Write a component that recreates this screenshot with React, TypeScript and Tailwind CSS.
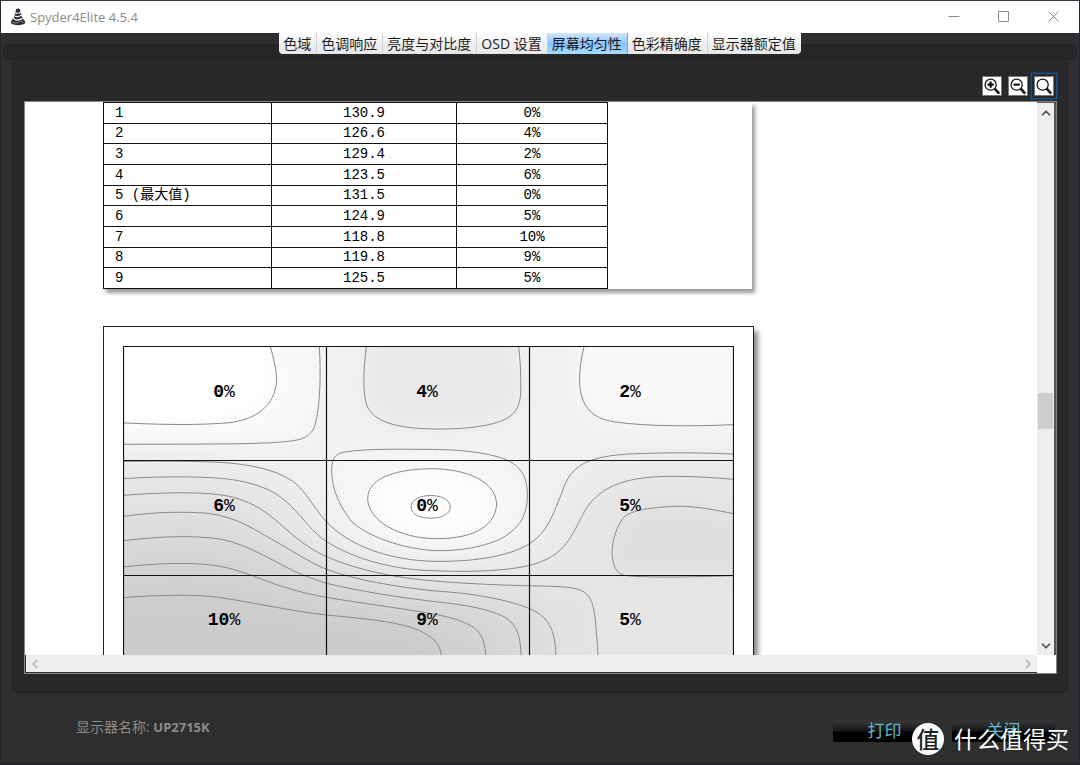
import { ChevronDown, ChevronLeft, ChevronRight, ChevronUp } from 'lucide-react';

const tabs = ['色域', '色调响应', '亮度与对比度', 'OSD 设置', '屏幕均匀性', '色彩精确度', '显示器额定值'];

const rows = [
    { zone: '1', luminance: '130.9', diff: '0%' },
    { zone: '2', luminance: '126.6', diff: '4%' },
    { zone: '3', luminance: '129.4', diff: '2%' },
    { zone: '4', luminance: '123.5', diff: '6%' },
    { zone: '5 (最大值)', luminance: '131.5', diff: '0%' },
    { zone: '6', luminance: '124.9', diff: '5%' },
    { zone: '7', luminance: '118.8', diff: '10%' },
    { zone: '8', luminance: '119.8', diff: '9%' },
    { zone: '9', luminance: '125.5', diff: '5%' },
];

// contour lines, drawn at three units per pixel
const closedRegions = [
    { fill: '#f8f8f8', line: 'M613 80 C618 160 616 260 600 315 C590 350 560 360 520 364 C440 373 300 372 25 373', close: 'H-60 V0 H613 Z' },
    { fill: '#ffffff', line: 'M466 80 C476 115 485 150 485 185 C480 250 430 305 320 310 C200 317 120 312 25 309', close: 'H-60 V0 H466 Z' },
    { fill: '#e9e9e9', line: 'M754 80 C745 150 743 220 755 255 C775 305 840 325 960 327 C1050 328 1130 318 1170 298 C1225 270 1217 220 1217 170 C1217 140 1214 110 1211 80', close: 'V0 H754 Z' },
    { fill: '#f9f9f9', line: 'M1407 80 C1397 120 1393 150 1394 190 C1398 260 1430 295 1500 306 C1600 320 1740 319 1855 314', close: 'H1940 V0 H1407 Z' },
    { fill: '#ebebeb', line: 'M25 424 C120 424 220 422 330 428 C430 436 490 455 535 485 C575 515 600 570 635 606 C700 675 820 722 960 724 C1090 726 1190 705 1244 671 C1300 635 1315 580 1340 520 C1355 470 1380 440 1420 424 C1470 404 1540 401 1600 400 C1700 397 1780 399 1855 402', close: 'H1940 V1200 H-60 V424 Z' },
    { fill: '#e6e6e6', line: 'M25 476 C150 468 300 468 370 482 C450 498 490 520 530 560 C570 600 590 635 635 665 C720 720 850 752 960 752 C1080 758 1190 750 1244 736 C1330 715 1360 670 1390 610 C1420 550 1430 540 1470 510 C1530 475 1600 469 1680 469 C1740 469 1800 473 1855 478', close: 'H1940 V1200 H-60 V476 Z' },
    { fill: '#e2e2e2', line: 'M25 526 C150 516 260 516 320 525 C420 540 470 590 510 625 C560 670 600 695 635 710 C730 752 850 775 960 783 C1060 792 1200 797 1280 798 C1340 800 1370 800 1400 812 C1440 830 1440 890 1445 950 C1449 985 1449 1000 1449 1110', close: 'V1200 H-60 V526 Z' },
    { fill: '#dddddd', line: 'M25 589 C120 576 200 574 280 580 C370 592 420 630 500 675 C560 710 600 735 635 748 C720 780 840 800 960 813 C1080 820 1180 840 1244 866 C1300 890 1322 930 1322 1005 V1110', close: 'V1200 H-60 V589 Z' },
    { fill: '#d7d7d7', line: 'M25 662 C130 650 230 644 320 658 C400 675 470 720 540 755 C580 772 610 782 635 790 C740 815 840 830 960 845 C1060 855 1130 870 1170 892 C1210 915 1217 960 1218 1005 V1110', close: 'V1200 H-60 V662 Z' },
    { fill: '#d1d1d1', line: 'M25 741 C120 730 230 725 310 738 C390 752 440 782 520 805 C560 818 600 826 635 832 C740 850 840 862 930 878 C1010 890 1050 905 1080 925 C1105 945 1111 980 1112 1005 V1110', close: 'V1200 H-60 V741 Z' },
    { fill: '#cccccc', line: 'M25 833 C150 823 250 824 310 832 C420 848 520 872 635 885 C740 895 850 905 910 930 C950 948 975 970 979 1005 V1110', close: 'V1200 H-60 V833 Z' },
    { fill: '#f5f5f5', line: 'M650 450 C650 410 665 400 690 396 C760 385 860 388 930 388 C1050 388 1130 400 1180 422 C1225 445 1238 480 1237 530 C1236 590 1210 630 1150 660 C1080 690 1000 693 960 692 C860 686 760 650 710 605 C675 560 650 510 650 450', close: 'Z' },
    { fill: '#fdfdfd', line: 'M758 535 C760 470 850 446 960 446 C1070 450 1142 490 1145 552 C1142 610 1090 656 965 656 C850 656 758 600 758 535', close: 'Z' },
    { fill: '#ffffff', line: 'M888 561 C888 515 1006 515 1006 561 C1006 606 888 606 888 561', close: 'Z' },
    { fill: '#e0e0e0', line: 'M1855 581 C1800 570 1740 557 1680 559 C1600 563 1540 570 1520 600 C1495 640 1490 680 1492 710 C1497 750 1510 766 1540 768 C1640 774 1750 770 1855 767', close: 'H1940 V581 Z' },
];

const zoneLabels = [
    ['0', '4', '2'],
    ['6', '0', '5'],
    ['10', '9', '5'],
];

function AppIcon() {
    return (
        <svg className="w-4 h-[18px]" viewBox="0 0 16 18" fill="none">
            <path d="M6 1.2Q8 0 10 1.2L10.6 5L12.2 10L15 13.2Q16 15.5 12.5 16.6Q8 18 3.5 16.6Q0 15.5 1 13.2L3.8 10L5.4 5Z" fill="#2a2d31" />
            <path d="M5.4 4.6Q8.5 6.2 10.6 3.8M4.6 8.2Q8.8 9.4 11.4 6.8M3.6 10.4Q6 13.6 12.2 10.6" stroke="#f1f1f1" strokeWidth="1.2" />
            <path d="M2 14Q7 16 9 13.8M9 12.4L13.5 14.6" stroke="#8d9298" />
        </svg>
    );
}

function TitleBar() {
    return (
        <header className="h-[33px] shrink-0 bg-white border-t border-[#3a3a3a] flex items-center pl-[9px] text-[#8c8c8c]">
            <AppIcon />
            <h1 className="flex-1 ml-1 text-[13px] leading-5 font-['Open_Sans','Noto_Sans',sans-serif]">Spyder4Elite 4.5.4</h1>
            <button aria-label="Minimize" className="w-[50px] h-full flex items-center justify-center">
                <svg className="w-3 h-3" viewBox="0 0 12 12" stroke="currentColor"><path d="M0.5 5.5H11.5" /></svg>
            </button>
            <button aria-label="Maximize" className="w-[50px] h-full flex items-center justify-center">
                <svg className="w-3 h-3" viewBox="0 0 12 12" fill="none" stroke="currentColor"><path d="M0.5 0.5H10.5V10.5H0.5Z" /></svg>
            </button>
            <button aria-label="Close" className="w-[50px] h-full flex items-center justify-center">
                <svg className="w-3 h-3" viewBox="0 0 12 12" stroke="currentColor"><path d="M0.5 0.5L10.5 10.5M10.5 0.5L0.5 10.5" /></svg>
            </button>
        </header>
    );
}

function TabStrip() {
    return (
        <div className="relative h-[26px] shrink-0 flex justify-center">
            <div className="absolute inset-x-0.5 bottom-0 h-[15px] rounded bg-[#272727] border border-[#212121]"></div>
            <nav className="relative h-[21px] flex rounded-b overflow-hidden bg-linear-to-b from-white via-[#f0f0f0] to-[#e6e6e6]">
                {tabs.map((tab) => (
                    <button
                        key={tab}
                        className={
                            tab === '屏幕均匀性'
                                ? 'pl-1 pr-[5px] border-r border-[#6aaee6] bg-linear-to-b from-[#d3e8fd] via-[#8ac4fa] to-[#a5dcff] text-sm leading-5 text-[#101828] whitespace-nowrap'
                                : 'pl-1 pr-[5px] border-r border-[#d0d0d0] last:border-r-0 text-sm leading-5 text-[#1c1c1c] whitespace-nowrap'
                        }
                    >
                        {tab}
                    </button>
                ))}
            </nav>
        </div>
    );
}

function ZoomButton({ label, sign, focused }: { label: string; sign?: string; focused?: boolean }) {
    return (
        <button
            aria-label={label}
            className={focused ? 'p-0.5 border border-[#1c4f80] outline outline-[#173f66]' : 'p-[3px]'}
        >
            <svg className="w-5 h-5 bg-white border border-[#777]" viewBox="0 0 20 20" fill="none" stroke="#111">
                <circle cx="8.5" cy="8.5" r="6.2" strokeWidth="1.4" />
                <path d="M13 13L18 18.5" strokeWidth="2.8" />
                {sign && <path d={sign} strokeWidth="2.4" />}
            </svg>
        </button>
    );
}

function ResultTable() {
    return (
        <div className="w-[649px] bg-white shadow-[3px_4px_4px_#999]">
            <table className="w-[505px] h-[187px] table-fixed border-collapse font-['Liberation_Mono','Noto_Sans_CJK_SC',monospace] text-sm leading-4 text-black">
                <colgroup>
                    <col className="w-[168px]" />
                    <col className="w-[185px]" />
                    <col />
                </colgroup>
                <tbody>
                    {rows.map((row) => (
                        <tr key={row.zone}>
                            <td className="border border-[#111] p-0 pl-[11px]">{row.zone}</td>
                            <td className="border border-[#111] p-0 text-center">{row.luminance}</td>
                            <td className="border border-[#111] p-0 text-center">{row.diff}</td>
                        </tr>
                    ))}
                </tbody>
            </table>
        </div>
    );
}

function UniformityMap() {
    return (
        <div className="w-[651px] p-[19px] pb-10 bg-white border border-[#222] shadow-[4px_5px_5px_#888]">
            <svg className="block w-[611px] h-[344px]" viewBox="0 0 611 344">
                <defs>
                    <filter id="soften" x="-5%" y="-5%" width="110%" height="110%">
                        <feGaussianBlur stdDeviation="28" />
                    </filter>
                </defs>
                <rect width="611" height="344" fill="#f1f1f1" />
                <g transform="scale(0.33333) translate(-24 -78)" fill="none">
                    <g filter="url(#soften)">
                        <path d="M-60 0H1940V1200H-60Z" fill="#f1f1f1" />
                        {closedRegions.map((r) => <path key={r.line} d={`${r.line} ${r.close}`} fill={r.fill} />)}
                    </g>
                    <g stroke="#8a8a8a" strokeWidth="3">
                        {closedRegions.map((r) => <path key={r.line} d={r.line} />)}
                    </g>
                </g>
                <path d="M0.5 344V0.5H610.5V344M203.5 0V344M406.5 0V344M0 114.5H611M0 229.5H611" fill="none" stroke="#111" strokeWidth="1.2" />
                <g textAnchor="middle" className="font-['Liberation_Mono',monospace] font-bold text-[18px]" fill="#000">
                    {zoneLabels.map((line, y) =>
                        line.map((label, x) => (
                            <text key={`${x}-${y}`} x={101 + x * 203} y={51 + y * 114}>
                                {label}<tspan className="font-normal">%</tspan>
                            </text>
                        ))
                    )}
                </g>
            </svg>
        </div>
    );
}

function Viewer() {
    return (
        <div className="flex-1 min-h-0 bg-white border border-[#858585] flex flex-col">
            <div className="flex-1 min-h-0 flex">
                <div className="flex-1 min-w-0 overflow-hidden pl-[78px] flex flex-col gap-[37px]">
                    <ResultTable />
                    <UniformityMap />
                </div>
                <div className="w-[19px] shrink-0 bg-[#eeeeee] border-t border-r-2 border-[#555] flex flex-col items-center text-[#505050]">
                    <button aria-label="Scroll up" className="py-[3px]"><ChevronUp size={14} strokeWidth={3} /></button>
                    <div className="grow-[272]"></div>
                    <div className="w-[15px] h-9 bg-[#cdcdcd]"></div>
                    <div className="grow-[210]"></div>
                    <button aria-label="Scroll down" className="py-0.5"><ChevronDown size={14} strokeWidth={3} /></button>
                </div>
            </div>
            <div className="h-[18px] shrink-0 flex">
                <div className="flex-1 bg-[#eeeeee] border-l border-b border-[#333] flex items-center justify-between px-0.5 text-[#b5b5b5]">
                    <button aria-label="Scroll left"><ChevronLeft size={14} strokeWidth={3} /></button>
                    <button aria-label="Scroll right"><ChevronRight size={14} strokeWidth={3} /></button>
                </div>
                <div className="w-[19px] bg-white"></div>
            </div>
        </div>
    );
}

function Watermark() {
    return (
        <div className="absolute right-[10px] bottom-2 flex items-center gap-[10px] text-white">
            <span className="w-8 h-8 rounded-full bg-white text-[#222] text-[23px] leading-8 font-medium text-center">值</span>
            <span className="text-[23px] leading-8">什么值得买</span>
        </div>
    );
}

export default function App() {
    return (
        <div className="h-screen flex flex-col bg-[#2e2e2e] border-x border-[#24242a] font-['Open_Sans','Noto_Sans_CJK_SC',sans-serif]">
            <TitleBar />
            <TabStrip />
            <main className="flex-1 min-h-0 mx-[11px] pl-[11px] pr-[10px] pb-[18px] bg-[#282828] border border-t-0 border-[#222] rounded-b-lg flex flex-col">
                <div className="h-[42px] shrink-0 flex justify-end items-center pt-3">
                    <ZoomButton label="Zoom in" sign="M5 8.5H12M8.5 5V12" />
                    <ZoomButton label="Zoom out" sign="M5 8.5H12" />
                    <ZoomButton label="Actual size" focused />
                </div>
                <Viewer />
            </main>
            <footer className="relative h-[72px] shrink-0 flex items-center justify-between pl-[75px] pr-6 border-b-2 border-[#25232d]">
                <p className="pb-0.5 text-sm text-[#8b8b8b]">显示器名称: <b className="text-[13px]">UP2715K</b></p>
                <div className="flex gap-4 pt-1.5 text-[17px] leading-5 text-[#5fb9d0]">
                    <button className="w-[103px] h-[22px] bg-linear-to-b from-[#333] from-10% via-[#161616] to-black to-60% rounded-xs">打印</button>
                    <button className="w-[103px] h-[22px] bg-linear-to-b from-[#333] from-10% via-[#161616] to-black to-60% rounded-xs">关闭</button>
                </div>
                <Watermark />
            </footer>
        </div>
    );
}
